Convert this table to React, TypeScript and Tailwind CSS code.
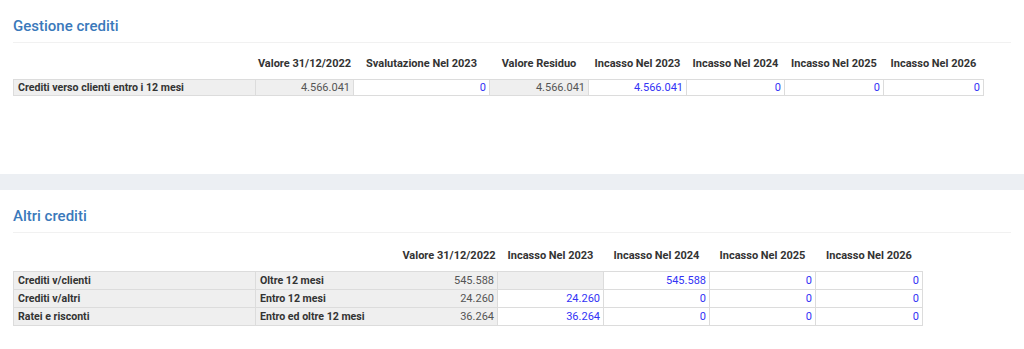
const FONT = { fontFamily: 'Roboto, "Liberation Sans", sans-serif' };

type Cell = { v: string; kind: 'gray' | 'input' | 'empty' };

const gestioneCols = [
  'Valore 31/12/2022',
  'Svalutazione Nel 2023',
  'Valore Residuo',
  'Incasso Nel 2023',
  'Incasso Nel 2024',
  'Incasso Nel 2025',
  'Incasso Nel 2026',
];
const gestioneWidths = [242, 98, 136, 99, 98, 98, 99, 100];

const gestioneRow: Cell[] = [
  { v: '4.566.041', kind: 'gray' },
  { v: '0', kind: 'input' },
  { v: '4.566.041', kind: 'gray' },
  { v: '4.566.041', kind: 'input' },
  { v: '0', kind: 'input' },
  { v: '0', kind: 'input' },
  { v: '0', kind: 'input' },
];

const altriCols = ['Incasso Nel 2023', 'Incasso Nel 2024', 'Incasso Nel 2025', 'Incasso Nel 2026'];
const altriWidths = [242, 145, 97, 106, 106, 106, 107];

const altriRows: { label: string; desc: string; valore: string; cells: Cell[] }[] = [
  {
    label: 'Crediti v/clienti',
    desc: 'Oltre 12 mesi',
    valore: '545.588',
    cells: [
      { v: '', kind: 'empty' },
      { v: '545.588', kind: 'input' },
      { v: '0', kind: 'input' },
      { v: '0', kind: 'input' },
    ],
  },
  {
    label: 'Crediti v/altri',
    desc: 'Entro 12 mesi',
    valore: '24.260',
    cells: [
      { v: '24.260', kind: 'input' },
      { v: '0', kind: 'input' },
      { v: '0', kind: 'input' },
      { v: '0', kind: 'input' },
    ],
  },
  {
    label: 'Ratei e risconti',
    desc: 'Entro ed oltre 12 mesi',
    valore: '36.264',
    cells: [
      { v: '36.264', kind: 'input' },
      { v: '0', kind: 'input' },
      { v: '0', kind: 'input' },
      { v: '0', kind: 'input' },
    ],
  },
];

function ValueCell({ cell }: { cell: Cell }) {
  const cls =
    cell.kind === 'input'
      ? 'bg-white text-[#3333f5]'
      : 'bg-[#efefef] text-[#555]';
  return (
    <td className={`border border-[#dcdcdc] px-[3px] text-right text-[11px] ${cls}`}>
      {cell.v}
    </td>
  );
}

function SectionTitle({ children }: { children: string }) {
  return (
    <div className="pt-[16px]">
      <h2 className="text-[15px] leading-[20px] font-medium text-[#3a79bb]">{children}</h2>
      <div className="mt-[6px] h-px bg-[#f1f1f1]" />
    </div>
  );
}

function Cols({ widths }: { widths: number[] }) {
  return (
    <colgroup>
      {widths.map((w, i) => (
        <col key={i} style={{ width: w }} />
      ))}
    </colgroup>
  );
}

export default function App() {
  return (
    <div className="w-[1024px] h-[349px] bg-white text-[#333]" style={FONT}>
      <section className="h-[174px] px-[13px]">
        <SectionTitle>Gestione crediti</SectionTitle>
        <table className="mt-[13px] w-[970px] border-collapse table-fixed">
          <Cols widths={gestioneWidths} />
          <thead>
            <tr>
              <th />
              {gestioneCols.map((c) => (
                <th
                  key={c}
                  className="text-center text-[11px] leading-[16px] font-bold text-[#333] pb-[7px] whitespace-nowrap"
                >
                  {c}
                </th>
              ))}
            </tr>
          </thead>
          <tbody className="leading-[15px]">
            <tr>
              <td className="border border-[#dcdcdc] bg-[#efefef] px-[4px] text-[10.6px] font-bold">
                Crediti verso clienti entro i 12 mesi
              </td>
              {gestioneRow.map((c, i) => (
                <ValueCell key={i} cell={c} />
              ))}
            </tr>
          </tbody>
        </table>
      </section>

      <div className="h-[16px] bg-[#eceff3]" />

      <section className="px-[13px]">
        <SectionTitle>Altri crediti</SectionTitle>
        <table className="mt-[15px] w-[909px] border-collapse table-fixed">
          <Cols widths={altriWidths} />
          <thead>
            <tr>
              <th />
              <th />
              <th className="text-center text-[11px] leading-[16px] font-bold pb-[7px] whitespace-nowrap">
                Valore 31/12/2022
              </th>
              {altriCols.map((c) => (
                <th
                  key={c}
                  className="text-center text-[11px] leading-[16px] font-bold pb-[7px] whitespace-nowrap"
                >
                  {c}
                </th>
              ))}
            </tr>
          </thead>
          <tbody className="leading-[17px]">
            {altriRows.map((r) => (
              <tr key={r.label}>
                <td className="border border-[#dcdcdc] bg-[#efefef] px-[4px] text-[10.6px] font-bold">
                  {r.label}
                </td>
                <td className="border border-[#dcdcdc] border-r-0 bg-[#efefef] px-[4px] text-[10.6px] font-bold">
                  {r.desc}
                </td>
                <td className="border border-[#dcdcdc] border-l-0 bg-[#efefef] px-[3px] text-right text-[11px] text-[#555]">
                  {r.valore}
                </td>
                {r.cells.map((c, i) => (
                  <ValueCell key={i} cell={c} />
                ))}
              </tr>
            ))}
          </tbody>
        </table>
      </section>
    </div>
  );
}
